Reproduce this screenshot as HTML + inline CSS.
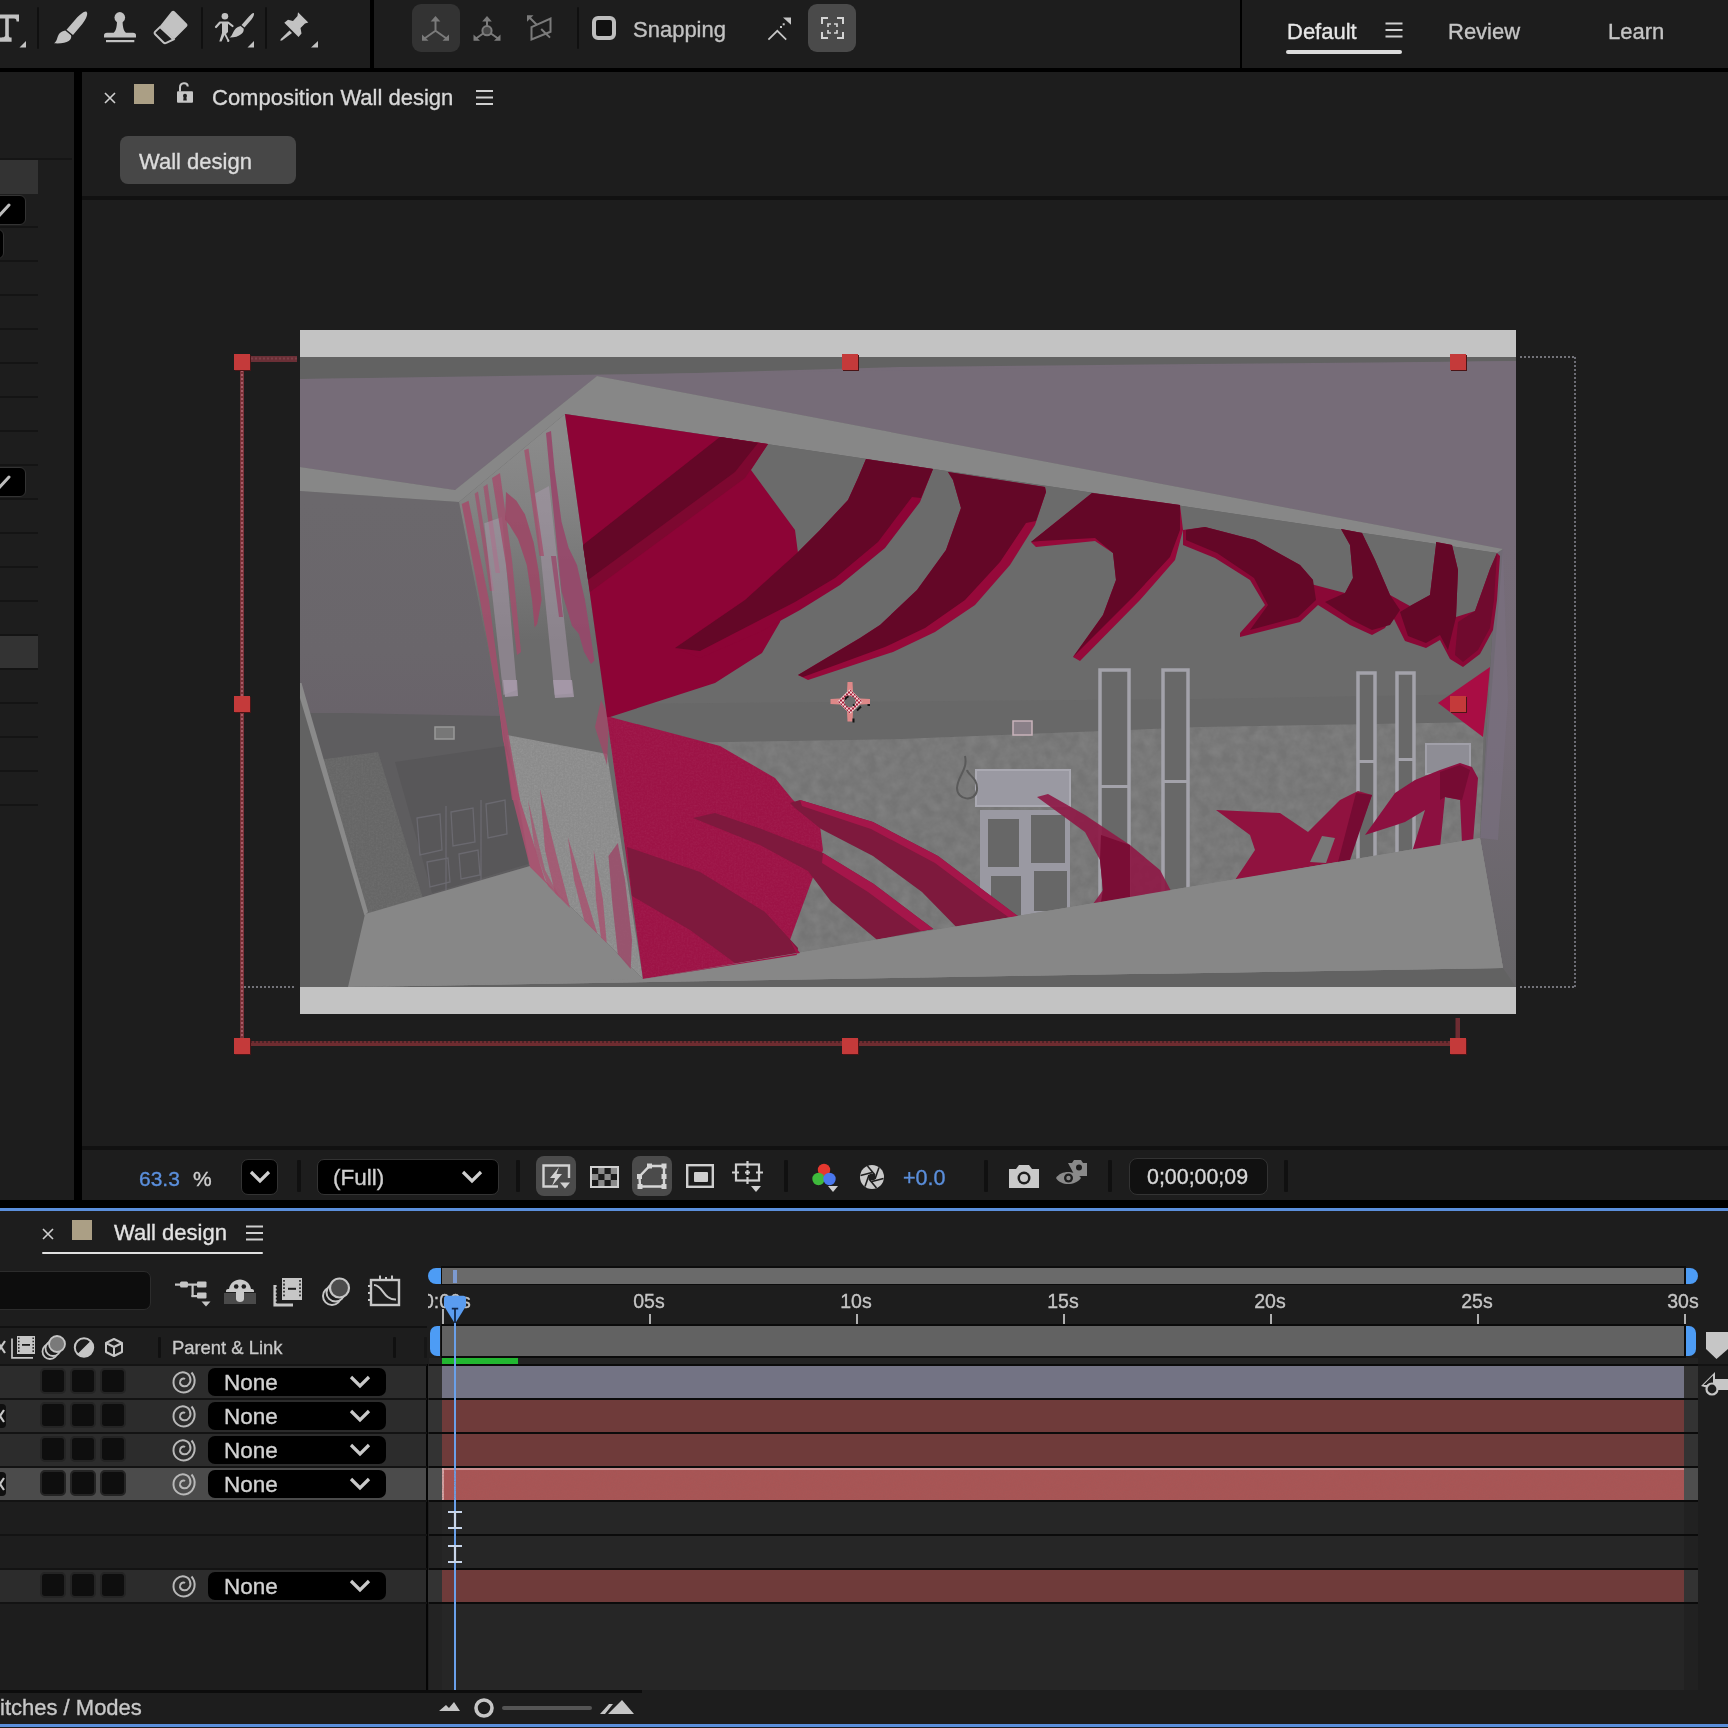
<!DOCTYPE html>
<html><head><meta charset="utf-8"><title>Wall design</title>
<style>
html,body{margin:0;padding:0}
body{width:1728px;height:1728px;overflow:hidden;background:#1d1d1d;font-family:"Liberation Sans",sans-serif;color:#d4d4d4;font-size:22px}
#r{position:relative;width:1728px;height:1728px;overflow:hidden;background:#1d1d1d}
.a{position:absolute}
.t{position:absolute;white-space:nowrap;line-height:1;will-change:transform;-webkit-text-stroke:0.350px currentColor}
svg{position:absolute;overflow:visible}
.sep{position:absolute;background:#101010;width:3px;border-radius:1px}
.sw{position:absolute;width:26px;height:26px;background:#0e0e0e;border:2px solid #242424;border-radius:5px;box-sizing:border-box}
.dd{position:absolute;left:208px;width:178px;height:28px;background:#000;border-radius:7px}
.row{position:absolute;left:0;width:426px;height:32px;background:#2c2c2c}
.bar{position:absolute;left:442px;width:1242px;height:32px}
.trk{position:absolute;left:428px;width:1270px;height:32px;background:#333}
</style></head><body><div id="r">
<!-- top toolbar -->
<div class="a" style="left:0;top:68px;width:1728px;height:4px;background:#000"></div>
<div class="a" style="left:370px;top:0;width:4px;height:68px;background:#000"></div>
<div class="a" style="left:1240px;top:0;width:2px;height:68px;background:#000"></div>
<div class="sep" style="left:37px;top:7px;height:42px;width:2px"></div>
<div class="sep" style="left:201px;top:7px;height:42px;width:2px"></div>
<div class="sep" style="left:265px;top:7px;height:42px;width:2px"></div>
<div class="sep" style="left:577px;top:7px;height:42px;width:2px"></div>
<div class="a" style="left:412px;top:4px;width:48px;height:48px;background:#333;border-radius:9px"></div>
<div class="a" style="left:808px;top:4px;width:48px;height:48px;background:#4a4a4a;border-radius:9px"></div>
<div class="a" style="left:592px;top:16px;width:24px;height:24px;box-sizing:border-box;border:4px solid #bdbdbd;border-radius:6px;background:#111"></div>
<div class="t" style="left:633px;top:19px;font-size:22px;color:#c2c2c2">Snapping</div>
<div class="t" style="left:1287px;top:21px;font-size:22px;color:#e6e6e6">Default</div>
<div class="a" style="left:1286px;top:50px;width:116px;height:4px;background:#dcdcdc;border-radius:2px"></div>
<div class="t" style="left:1448px;top:21px;font-size:22px;color:#c4c4c4">Review</div>
<div class="t" style="left:1608px;top:21px;font-size:22px;color:#c4c4c4">Learn</div>
<svg style="left:1385px;top:22px" width="18" height="16" viewBox="0 0 18 16"><path d="M0.500 1.500H17.500M0.500 8H17.500M0.500 14.500H17.500" stroke="#cfcfcf" stroke-width="1.800"/></svg>
<svg style="left:0;top:0" width="400" height="60" viewBox="0 0 400 60"><g fill="#c2c2c2"><path d="M-8 14.500H19V21.500H16.500C16.500 19.500 16 18.500 14 18.500H8.800V35.500C8.800 37.300 9.500 37.600 11.600 37.600V41.700H-1V37.600C1 37.600 5.200 37.500 5.200 35.500V18.500H-8Z"/><path d="M19.500 47.500H26V41Z"/><path d="M247.500 47.500H254V41Z"/><path d="M311 47.500H318V41Z"/><path d="M86.500 11.800C88.600 13.600 85.800 20 82.300 24L73 35L66.500 29.800L76 18.800C80 14.300 85 10.500 86.500 11.800Z"/><path d="M65.300 30.600L71 35.200C72.600 39.800 67 44.200 54 43.300C59 41 55.300 32.600 65.300 30.600Z"/><circle cx="119.800" cy="17.400" r="5.300"/><path d="M117 20H122.600C122.600 25 123 30 126 33H113.600C116.600 30 117 25 117 20Z"/><path d="M104 37.600V35.500C104 33.800 105 32.800 107 32.800H133C135 32.800 136 33.800 136 35.500V37.600Z"/><rect x="106" y="40" width="28.300" height="2.200"/><path d="M171.500 11.500C172.500 10.500 173.800 10.500 174.800 11.500L186.700 23.400C187.700 24.400 187.700 25.700 186.700 26.700L174.200 39.200L159.800 26.200Z"/><path d="M160 27L173.500 39.500L166.300 42.800C165.300 43.500 164.300 43.300 163.500 42.500L155.200 34.200C154.400 33.400 154.400 32.400 155.200 31.600Z" fill="none" stroke="#c2c2c2" stroke-width="2"/><circle cx="224.900" cy="16.200" r="3.300"/><path d="M216 27L220 22.500H228L232.500 26" fill="none" stroke="#c2c2c2" stroke-width="2.200" stroke-linecap="round" stroke-linejoin="round"/><path d="M222 22H228V32L226 34L229 40H227L224.500 35L221.500 41.500H219.300L222 33Z"/><circle cx="228.200" cy="40.800" r="1.200"/><path d="M253.800 13C254.500 14 253.600 17 251.500 19.500L244.500 27.500L241.500 25L249 16.500C251 14.200 253 12.500 253.800 13Z"/><path d="M240.600 26L243.600 28.500C244.600 32 240.500 37.500 229.500 37.600C233.500 35.500 232.500 28 240.600 26Z"/><path d="M298 12.300L308.300 22.600L305 23.500L300.500 28L301.500 33.500L298.500 37L284.300 22.700L288 19.700L293 21L297.500 16Z"/><path d="M289.500 30.500L292 33L282 40.500L280.300 40.800L280.800 39Z"/></g></svg><svg style="left:400px;top:0" width="200" height="60" viewBox="400 0 200 60"><g stroke="#7b7b7b" stroke-width="2" fill="none"><path d="M435.5 30.700V20M435.5 30.700L424.5 38.500M435.5 30.700L446.5 38.500"/></g><g fill="#7b7b7b"><path d="M435.5 16L440.3 21.500H430.7Z"/><path d="M422 40.800V34.500L428.5 40.800Z"/><path d="M449 40.800V34.500L442.5 40.800Z"/></g><g stroke="#7b7b7b" stroke-width="2" fill="none"><path d="M487 30.700V20M487 30.700L476 38.500M487 30.700L498 38.500"/></g><g fill="#7b7b7b"><path d="M487 16L491.8 21.500H482.2Z"/><path d="M473.5 40.800V34.500L480 40.800Z"/><path d="M500.5 40.800V34.500L494 40.800Z"/></g><circle cx="487" cy="30.700" r="4.600" fill="#444" stroke="#7b7b7b" stroke-width="2"/><path d="M531.500 27.200L550.500 18.500V31.800L531.500 39.400Z" fill="none" stroke="#7b7b7b" stroke-width="2"/><path d="M537 25L529.500 17.500M541.200 29L550 37.600" stroke="#7b7b7b" stroke-width="2"/><path d="M527 15.300H533.500L527 21.800Z" fill="#7b7b7b"/></svg><svg style="left:760px;top:0" width="100" height="60" viewBox="760 0 100 60"><path d="M768.400 39.700L777.300 30.800L786.200 39.700" fill="none" stroke="#c6c6c6" stroke-width="1.700"/><path d="M783 17.400H791V24.800Z" fill="#c6c6c6"/><rect x="782.700" y="23.300" width="2" height="2" fill="#c6c6c6"/><rect x="780" y="26" width="2" height="2" fill="#c6c6c6"/><g fill="none" stroke="#d4d4d4" stroke-width="2"><path d="M822 24V18H828M837 18H843V24M843 32V38H837M828 38H822V32"/><path d="M828 27V24H831M834 24H837V27M837 30V33H834M831 33H828V30" stroke-width="1.700"/></g></svg>
<!-- left panel + comp header -->
<div class="a" style="left:74px;top:72px;width:8px;height:1128px;background:#000"></div>
<div class="a" style="left:82px;top:196px;width:1646px;height:4px;background:#111"></div>
<div class="a" style="left:82px;top:1146px;width:1646px;height:4px;background:#111"></div>
<div class="a" style="left:0;top:1200px;width:1728px;height:8px;background:#000"></div>
<div class="a" style="left:0;top:1208px;width:1728px;height:3px;background:#5b8fdc"></div>
<div class="a" style="left:134px;top:84px;width:20px;height:20px;background:#ab9f85"></div>
<svg style="left:174px;top:80px" width="24" height="26" viewBox="174 80 24 26"><rect x="177" y="91.200" width="16" height="11.600" rx="1" fill="#c6c6c6"/><path d="M180 91.500V87.500C180 82 187.500 82 187.800 86.500" fill="none" stroke="#c6c6c6" stroke-width="2"/><circle cx="185" cy="95.800" r="2" fill="#1d1d1d"/><path d="M183.800 96H186.200L186.800 100.500H183.200Z" fill="#1d1d1d"/></svg>
<div class="t" style="left:212px;top:87px;font-size:22px;color:#d8d8d8">Composition Wall design</div>
<div class="a" style="left:120px;top:136px;width:176px;height:48px;background:#474747;border-radius:8px"></div>
<div class="t" style="left:139px;top:151px;font-size:22px;color:#dcdcdc">Wall design</div>
<svg style="left:104px;top:92px" width="12" height="12" viewBox="0 0 12 12"><path d="M1 1L11 11M11 1L1 11" stroke="#cfcfcf" stroke-width="1.600"/></svg>
<svg style="left:476px;top:90px" width="17" height="15" viewBox="0 0 17 15"><path d="M0 1H17M0 7.500H17M0 14H17" stroke="#cfcfcf" stroke-width="1.800"/></svg>

<div class="a" style="left:0;top:158px;width:72px;height:2px;background:#151515"></div><div class="a" style="left:0;top:160px;width:38px;height:34px;background:#333"></div><div class="a" style="left:0;top:636px;width:38px;height:34px;background:#333"></div><div class="a" style="left:0;top:226px;width:38px;height:2px;background:#141414"></div><div class="a" style="left:0;top:260px;width:38px;height:2px;background:#141414"></div><div class="a" style="left:0;top:294px;width:38px;height:2px;background:#141414"></div><div class="a" style="left:0;top:328px;width:38px;height:2px;background:#141414"></div><div class="a" style="left:0;top:362px;width:38px;height:2px;background:#141414"></div><div class="a" style="left:0;top:396px;width:38px;height:2px;background:#141414"></div><div class="a" style="left:0;top:430px;width:38px;height:2px;background:#141414"></div><div class="a" style="left:0;top:464px;width:38px;height:2px;background:#141414"></div><div class="a" style="left:0;top:498px;width:38px;height:2px;background:#141414"></div><div class="a" style="left:0;top:532px;width:38px;height:2px;background:#141414"></div><div class="a" style="left:0;top:566px;width:38px;height:2px;background:#141414"></div><div class="a" style="left:0;top:600px;width:38px;height:2px;background:#141414"></div><div class="a" style="left:0;top:634px;width:38px;height:2px;background:#141414"></div><div class="a" style="left:0;top:668px;width:38px;height:2px;background:#141414"></div><div class="a" style="left:0;top:702px;width:38px;height:2px;background:#141414"></div><div class="a" style="left:0;top:736px;width:38px;height:2px;background:#141414"></div><div class="a" style="left:0;top:770px;width:38px;height:2px;background:#141414"></div><div class="a" style="left:0;top:804px;width:38px;height:2px;background:#141414"></div><div class="a" style="left:-8px;top:195px;width:34px;height:30px;background:#000;border:1px solid #333;border-radius:6px;box-sizing:border-box"></div><div class="a" style="left:-8px;top:229px;width:12px;height:30px;background:#000;border:1px solid #333;border-radius:6px;box-sizing:border-box"></div><div class="a" style="left:-8px;top:467px;width:34px;height:30px;background:#000;border:1px solid #333;border-radius:6px;box-sizing:border-box"></div><svg style="left:0;top:195px" width="26" height="30"><path d="M-2 22L9 10" stroke="#bdbdbd" stroke-width="3" stroke-linecap="round"/></svg><svg style="left:0;top:467px" width="26" height="30"><path d="M-2 22L9 10" stroke="#bdbdbd" stroke-width="3" stroke-linecap="round"/></svg>
<svg style="left:0;top:0" width="1728" height="1200" viewBox="0 0 1728 1200"><defs><clipPath id="cp"><rect x="300" y="357" width="1216" height="630"/></clipPath><filter id="nz" x="0" y="0" width="100%" height="100%"><feTurbulence type="fractalNoise" baseFrequency="0.55" numOctaves="2" seed="3"/><feColorMatrix type="matrix" values="0 0 0 0 1  0 0 0 0 1  0 0 0 0 1  0.5 0.5 0 0 -0.38"/><feComposite in2="SourceGraphic" operator="in"/></filter><filter id="nz2" x="0" y="0" width="100%" height="100%"><feTurbulence type="fractalNoise" baseFrequency="0.09" numOctaves="3" seed="8"/><feColorMatrix type="matrix" values="0 0 0 0 1  0 0 0 0 1  0 0 0 0 1  0.9 0.9 0 0 -0.55"/><feComposite in2="SourceGraphic" operator="in"/></filter><linearGradient id="gl" x1="0" y1="0" x2="1" y2="0"><stop offset="0" stop-color="#7e7e7e"/><stop offset="1" stop-color="#8a8a8a"/></linearGradient><linearGradient id="rw" x1="0" y1="0" x2="0" y2="1"><stop offset="0" stop-color="#766c78"/><stop offset="0.45" stop-color="#746b76"/><stop offset="1" stop-color="#666567"/></linearGradient><linearGradient id="gg" gradientUnits="userSpaceOnUse" x1="0" y1="440" x2="0" y2="640"><stop offset="0" stop-color="#8a8a8a"/><stop offset="0.35" stop-color="#828282"/><stop offset="1" stop-color="#6b6b6b"/></linearGradient><linearGradient id="lw" gradientUnits="userSpaceOnUse" x1="0" y1="500" x2="0" y2="715"><stop offset="0" stop-color="#6b686c"/><stop offset="0.7" stop-color="#6a666b"/><stop offset="1" stop-color="#69636a"/></linearGradient></defs><rect x="300" y="330" width="1216" height="684" fill="#c3c3c3"/><g clip-path="url(#cp)"><rect x="300" y="357" width="1216" height="630" fill="#626262"/><polygon points="300,379 597,376 900,367 1516,361 1516,600 1503,549 597,376 455,490 300,467" fill="#766c78" /><polygon points="300,379 1516,361 1516,600 1503,549 597,376 455,490 300,467" fill="#766c78" /><polygon points="1503,549 1516,540 1516,987 1503,968 1480,838" fill="url(#rw)" /><polygon points="1497,553 1503,549 1508,700 1498,840 1480,838" fill="#7a7080" opacity="0.6"/><polygon points="300,491 459,502 530,866 365,914 300,690" fill="url(#lw)" /><polygon points="300,712 500,716 530,866 365,914 306,712" fill="#5e5d5f" /><polygon points="318,760 378,752 425,905 365,914" fill="#666" /><polygon points="318,760 378,752 425,905 365,914" fill="#fff" filter="url(#nz)" opacity="0.12"/><polygon points="395,762 512,745 528,864 432,893" fill="#585759" /><g fill="none" stroke="#727079" stroke-width="1.300" opacity="0.7"><path d="M417 818L440 814L442 850L420 855ZM451 812L473 808L475 842L453 846ZM486 804L505 800L507 834L488 838ZM427 862L448 858L450 882L430 887ZM459 854L478 850L480 875L461 879ZM446 806V890M481 800V880"/></g><polygon points="300,690 365,914 348,987 300,987" fill="#626262" /><polygon points="300,683 301.5,683 368,912 364.5,915.5 300,698" fill="#8a8a8a" /><polygon points="300,467 455,490 597,376 1503,549 1497,553 565,414 459,502 300,491" fill="#878787" /><polygon points="348,987 365,914 530,866 643,979 1480,838 1503,968" fill="#878787" /><polygon points="565,414 1497,553 1480,838 643,979" fill="#6b6b6b" /><polygon points="600,704 1200,699 1489,694 1484,722 1200,727 900,739 604,744" fill="#686868" /><polygon points="604,744 900,739 1200,727 1484,722 1480,838 643,979" fill="#747474" /><polygon points="604,744 900,739 1200,727 1484,722 1480,838 643,979" fill="#fff" filter="url(#nz2)" opacity="0.1"/><rect x="1100" y="670" width="29" height="232" fill="#686868" stroke="#a3a2aa" stroke-width="3.500"/><rect x="1100" y="785" width="29" height="3" fill="#a3a2aa"/><rect x="1163" y="670" width="25" height="232" fill="#686868" stroke="#a3a2aa" stroke-width="3.500"/><rect x="1163" y="780" width="25" height="3" fill="#a3a2aa"/><rect x="1358" y="673" width="17" height="189" fill="#686868" stroke="#a3a2aa" stroke-width="3.500"/><rect x="1358" y="760" width="17" height="3" fill="#a3a2aa"/><rect x="1397" y="673" width="17" height="189" fill="#686868" stroke="#a3a2aa" stroke-width="3.500"/><rect x="1397" y="758" width="17" height="3" fill="#a3a2aa"/><rect x="976" y="770" width="94" height="36" fill="#9a99a2" stroke="#aaa9b2" stroke-width="2"/><rect x="980" y="810" width="90" height="105" fill="#9a99a2"/><rect x="988" y="819" width="31" height="48" fill="#676767"/><rect x="1031" y="815" width="34" height="48" fill="#676767"/><rect x="991" y="876" width="30" height="40" fill="#676767"/><rect x="1034" y="871" width="33" height="40" fill="#676767"/><rect x="1426" y="744" width="44" height="30" fill="#8e8d95" stroke="#a09fa8" stroke-width="2"/><rect x="1013" y="721" width="19" height="14" fill="#8a8088" stroke="#c9b3ba" stroke-width="1.500"/><path d="M965 756C968 770 958 775 957 788C957 800 975 803 977 790C978 778 968 775 967 770" fill="none" stroke="#5a5a5a" stroke-width="2"/><rect x="435" y="727" width="19" height="12" fill="#777" stroke="#999" stroke-width="1.500"/><polygon points="643,979 1480,838 1503,968 348,987" fill="#878787" /><polygon points="459,502 565,414 643,979 530,866" fill="url(#gg)" /><polygon points="507,735 607,754 643,979 530,866" fill="#8b8b8b" /><polygon points="507,735 607,754 643,979 530,866" fill="#fff" filter="url(#nz)" opacity="0.22"/><polygon points="503,680 517,680 518,696 505,697" fill="#aa9cae" opacity="0.8"/><polygon points="553,680 572,680 574,697 555,698" fill="#aa9cae" opacity="0.8"/><polygon points="461.7,504 468.6,500.7 489,600 501.6,695 520,800 512,800 497,695 480,600" fill="#a44c6b" opacity="0.85"/><polygon points="474.7,493.7 478,491.5 494,591 490,591" fill="#a44c6b" opacity="0.7"/><polygon points="483.4,486.8 487.5,484 500,573 495.5,573" fill="#a44c6b" opacity="0.7"/><polygon points="484.3,523.3 502,517 517,690 503.4,695" fill="#ab9cae" opacity="0.5"/><polygon points="492,478 500,473 512,560 521,652 517,655 506,565" fill="#a44c6b" opacity="0.8"/><polygon points="506,492 516.4,500.7 525,514.6 533.7,542.4 539,573.6 541.6,599.7 537.2,624 534.6,627.4 532,599.7 526.8,565 518,539 509.4,525 505,519.8" fill="#9c4866" opacity="0.9"/><polygon points="534.6,493.7 549,486 572.5,693.4 554.6,695" fill="#ab9cae" opacity="0.5"/><polygon points="524.2,450.3 528.5,448.6 544,556 539.5,556" fill="#a44c6b" opacity="0.75"/><polygon points="546,433 551,431 554.6,469.4 561.5,521.5 568.5,547.6 577,565 585,600 594.5,660.4 591,664 584,651.7 578.9,634 572,625.7 561.5,591 558,556 551,486.8" fill="#97486a" opacity="0.92"/><polygon points="551,556 556,556 563,617 559,617" fill="#97486a" opacity="0.8"/><polygon points="496,684 503,740 520,800 545,880 553,890 530,867 513,800" fill="#a8506e" opacity="0.9"/><polygon points="540,789 555,850 570,908 555,893 545,850" fill="#a8506e" opacity="0.8"/><polygon points="528,800 545,870 560,898 548,886 535,850" fill="#a8506e" opacity="0.7"/><polygon points="567.8,837 584,890 597.4,933.7 584.4,920.7 574,880" fill="#a8506e" opacity="0.8"/><polygon points="593.7,850 603,900 606.7,943 601,937.4 596,900" fill="#a8506e" opacity="0.8"/><polygon points="608.5,856 617.8,843 625,880 632,940 630.7,969 617.8,954 612,900" fill="#9a4a68" opacity="0.85"/><polygon points="601,700 595,727 607,765 609,717" fill="#a04868" opacity="0.8"/><polygon points="565,414 720,437 768,444 751,470 795,530 798,553 780,622 762,653 715,683 610,717 607,717" fill="#8d0436" /><polygon points="607,717 610,717 720,746 775,778 793,800 820,826 823,850 790,940 797,955 643,979" fill="#9d1346" /><polygon points="607,717 610,717 720,746 775,778 793,800 820,826 823,850 790,940 797,955 643,979" fill="#fff" filter="url(#nz)" opacity="0.10"/><polygon points="583,545 720,437 768,444 745,478 590,592" fill="#7d0830" /><polygon points="583,545 720,437 758,443 735,472 588,580" fill="#640727" /><polygon points="675,648 745,600 797,553 820,530 848,500 858,478 866,459 933,469 920,502 885,548 840,585 800,610 760,632 700,658" fill="#8d0436" /><polygon points="675,648 745,600 797,553 820,530 848,500 858,478 866,459 933,469 921,498 912,497 878,542 835,578 795,602 760,620 700,651" fill="#640727" /><polygon points="798,675 860,638 880,625 917,590 946,550 961,508 953,480 948,472 1045,487 1046,492 1035,525 1010,565 975,605 935,632 893,652 808,680" fill="#96093a" /><polygon points="798,675 860,638 880,625 917,590 946,550 961,508 953,480 948,472 1045,487 1046,492 1036,521 1026,523 1000,562 965,600 925,628 885,647 803,677" fill="#640727" /><polygon points="1092,493 1180,505 1183,530 1175,560 1140,600 1080,661 1073,657 1103,615 1116,580 1113,553 1095,541 1036,547 1031,542" fill="#96093a" /><polygon points="1092,493 1180,505 1180,530 1170,557 1133,597 1078,652 1073,657 1103,615 1116,580 1113,553 1095,538 1040,541 1031,542" fill="#640727" /><polygon points="1183,530 1205,527 1255,540 1300,565 1313,580 1307,583 1345,593 1353,578 1350,545 1341,529 1362,533 1375,560 1390,595 1410,606 1430,595 1436,545 1436,542 1452,545 1458,570 1456,617 1475,611 1490,569 1497,553 1500,556 1497,600 1493,630 1480,654 1463,667 1450,659 1440,640 1426,648 1405,641 1392,615 1385,628 1372,635 1350,625 1318,605 1300,622 1240,637 1240,633 1265,605 1250,580 1215,558 1183,545" fill="#8a0836" /><polygon points="1186,530 1205,527 1255,540 1300,565 1313,580 1316,600 1298,617 1250,630 1268,605 1254,578 1217,553 1186,540" fill="#640727" /><polygon points="1341,529 1362,533 1375,560 1390,595 1400,610 1390,625 1372,630 1352,620 1325,602 1345,593 1353,578 1350,545" fill="#640727" /><polygon points="1436,542 1452,545 1458,570 1456,617 1448,650 1440,635 1426,643 1408,636 1400,612 1410,606 1430,595 1436,545" fill="#640727" /><polygon points="1497,553 1490,569 1475,611 1458,622 1455,655 1463,662 1478,650 1490,628 1494,600" fill="#700a2e" /><polygon points="1438,703 1490,667 1487,700 1483,737" fill="#a90d44" /><polygon points="627,847 700,872 765,912 798,948 797,955 735,963 690,930 632,896" fill="#7e193d" /><polygon points="693,818 715,813 760,828.6 823,853 873.4,883.7 933.4,929 876.7,939.6 831,901.5 808,871 760,845" fill="#7e193d" /><polygon points="823,853 873.4,883.7 933.4,929 921,931 868,892 822,863" fill="#a5164a" /><polygon points="790,803 800,800 873,822 938,856 987,893 1017.7,916 956,926.7 922,892 873,856 821,829 795,808" fill="#7e193d" /><polygon points="800,800 873,822 938,856 987,893 1017.7,916 1009,917.5 983,899 935,863 871,829 802,806" fill="#a5164a" /><polygon points="1037,797 1048,794 1085,815 1130,845 1160,870 1171,891 1093,904 1103,890 1100,860 1085,832" fill="#8e1a46" opacity="0.92"/><polygon points="1101,835 1130,845 1130,897 1101,902 1103,890 1100,860" fill="#7a0d35" /><polygon points="1216,810 1280,813 1308,832 1340,800 1358,791 1372,795 1348,860 1235,880 1255,850 1250,835" fill="#90123f" /><polygon points="1310,862 1322,836 1335,838 1326,863" fill="#787878" /><polygon points="1356,793 1372,795 1350,860 1338,862" fill="#760b33" /><polygon points="1365,835 1395,793 1415,780 1440,770 1460,763 1472,767 1478,778 1473,842 1462,843 1460,800 1445,797 1440,848 1412,852 1425,810 1405,822" fill="#8c1040" /><polygon points="1440,772 1460,765 1470,770 1462,800 1445,797 1440,800" fill="#760b33" /><polygon points="643,979 1480,838 1503,968 348,987" fill="#878787" /><polygon points="643,979 797,955 790,940 800,953" fill="#9d1346" /></g></svg>
<svg style="left:0;top:0" width="1728" height="1200" viewBox="0 0 1728 1200"><rect x="251" y="356" width="46" height="6" fill="#6a2f36"/><path d="M251 358.500H297" stroke="#7d4048" stroke-width="2" stroke-dasharray="2 2"/><rect x="240" y="370" width="4" height="668" fill="#7a3238"/><path d="M242 370V1038" stroke="#a85a66" stroke-width="2" stroke-dasharray="2 2"/><rect x="250" y="1041" width="1200" height="5" fill="#6e2c30"/><path d="M250 1042H1450" stroke="#4a2226" stroke-width="2" stroke-dasharray="2 2"/><rect x="1455.500" y="1018" width="4.500" height="20" fill="#6e2c32"/><path d="M244 987H296M1520 987H1576M1520 357H1576" stroke="#737379" stroke-width="2" stroke-dasharray="2 2"/><path d="M1575 357V987" stroke="#6c6c74" stroke-width="2" stroke-dasharray="2 2"/><rect x="235" y="355" width="16" height="16" fill="#4a1416"/><rect x="234" y="354" width="16" height="16" fill="#c43a3a"/><rect x="843" y="355" width="16" height="16" fill="#4a1416"/><rect x="842" y="354" width="16" height="16" fill="#c43a3a"/><rect x="1451" y="355" width="16" height="16" fill="#4a1416"/><rect x="1450" y="354" width="16" height="16" fill="#c43a3a"/><rect x="235" y="697" width="16" height="16" fill="#4a1416"/><rect x="234" y="696" width="16" height="16" fill="#c43a3a"/><rect x="1451" y="697" width="16" height="16" fill="#4a1416"/><rect x="1450" y="696" width="16" height="16" fill="#c43a3a"/><rect x="235" y="1039" width="16" height="16" fill="#4a1416"/><rect x="234" y="1038" width="16" height="16" fill="#c43a3a"/><rect x="843" y="1039" width="16" height="16" fill="#4a1416"/><rect x="842" y="1038" width="16" height="16" fill="#c43a3a"/><rect x="1451" y="1039" width="16" height="16" fill="#4a1416"/><rect x="1450" y="1038" width="16" height="16" fill="#c43a3a"/><defs><pattern id="chk" width="4" height="4" patternUnits="userSpaceOnUse" x="0" y="0"><rect width="4" height="4" fill="#f6d5d5"/><rect width="2" height="2" fill="#a8203c"/><rect x="2" y="2" width="2" height="2" fill="#a8203c"/></pattern></defs><g transform="translate(850,701.500)"><path d="M-2.500 -19.500H2.500L3 -10H-3ZM-2.500 20H2.500L3 10H-3ZM-19.500 -2.500V2.500L-10 3V-3ZM20 -2.500V2.500L10 3V-3Z" fill="#de8888"/><path d="M0 -12.500L12.500 0L0 12.500L-12.500 0ZM0 -6L-6 0L0 6L6 0Z" fill="url(#chk)" fill-rule="evenodd"/><path d="M0 -12.500L12.500 0L0 12.500L-12.500 0Z" fill="none" stroke="#d8b0b0" stroke-width="1" opacity="0.6"/><circle r="5.500" fill="#6e6e6e"/><path d="M-5 -2A5.500 5.500 0 0 1 -1.500 -5.200" fill="none" stroke="#111" stroke-width="2"/><path d="M3 4L4.500 3M7 9L11 5M17.500 3.500H20M3.500 17V21" stroke="#151515" stroke-width="2"/></g></svg>
<!-- footer --><div class="t" style="left:139px;top:1168px;font-size:21px;color:#5b8fdc">63.3</div><div class="t" style="left:193px;top:1168px;font-size:21px;color:#cfcfcf">%</div><div class="a" style="left:241px;top:1159px;width:37px;height:36px;background:#000;border:1px solid #333;border-radius:7px;box-sizing:border-box"></div><svg style="left:249px;top:1170px" width="22" height="14" viewBox="0 0 22 14"><path d="M2 2L11 11L20 2" fill="none" stroke="#cfcfcf" stroke-width="3.200"/></svg><div class="sep" style="left:297px;top:1160px;height:32px;width:4px"></div><div class="a" style="left:317px;top:1159px;width:182px;height:36px;background:#000;border:1px solid #333;border-radius:7px;box-sizing:border-box"></div><div class="t" style="left:333px;top:1167px;font-size:22.500px;color:#cfcfcf">(Full)</div><svg style="left:461px;top:1170px" width="22" height="14" viewBox="0 0 22 14"><path d="M2 2L11 11L20 2" fill="none" stroke="#cfcfcf" stroke-width="3.200"/></svg><div class="sep" style="left:516px;top:1160px;height:32px;width:4px"></div><div class="a" style="left:536px;top:1156px;width:40px;height:40px;background:#4b4b4b;border-radius:8px"></div><div class="a" style="left:632px;top:1156px;width:40px;height:40px;background:#4b4b4b;border-radius:8px"></div><svg style="left:536px;top:1156px" width="40" height="40" viewBox="0 0 40 40"><path d="M33 22V9.500H7.500V30.500H22" fill="none" stroke="#d2d2d2" stroke-width="2.400"/><path d="M23 11L14 22H19L16 30L26 18H20.500Z" fill="#d2d2d2"/><path d="M24 26.500H34L29 32.500Z" fill="#d2d2d2"/></svg><svg style="left:590px;top:1166px" width="29" height="22" viewBox="0 0 29 22"><rect x="1" y="1" width="27" height="20" fill="#1a1a1a" stroke="#cfcfcf" stroke-width="2"/><rect x="8.25" y="2" width="6.250" height="6" fill="#8a8a8a"/><rect x="20.75" y="2" width="6.250" height="6" fill="#8a8a8a"/><rect x="2" y="8" width="6.250" height="6" fill="#8a8a8a"/><rect x="14.5" y="8" width="6.250" height="6" fill="#8a8a8a"/><rect x="8.25" y="14" width="6.250" height="6" fill="#8a8a8a"/><rect x="20.75" y="14" width="6.250" height="6" fill="#8a8a8a"/></svg><svg style="left:632px;top:1156px" width="40" height="40" viewBox="0 0 40 40"><path d="M8 30.500L7.500 20.500L17.500 10H32V30.500Z" fill="none" stroke="#d6d6d6" stroke-width="2.400"/><g fill="#d6d6d6"><rect x="5.500" y="28" width="5" height="5"/><rect x="29.500" y="28" width="5" height="5"/><rect x="29.500" y="7.500" width="5" height="5"/><rect x="15" y="7.500" width="5" height="5"/><rect x="5" y="18" width="5" height="5"/><rect x="29.500" y="18" width="5" height="5"/></g></svg><svg style="left:686px;top:1164px" width="28" height="24" viewBox="0 0 28 24"><rect x="1.200" y="1.200" width="25.600" height="21.600" fill="none" stroke="#cfcfcf" stroke-width="2.400"/><rect x="8" y="8" width="14" height="10" rx="1" fill="#cfcfcf"/></svg><svg style="left:732px;top:1160px" width="32" height="34" viewBox="0 0 32 34"><rect x="4" y="4.500" width="23" height="16" fill="none" stroke="#cfcfcf" stroke-width="2.200"/><path d="M15.500 1V8M15.500 17V24M0 12.500H7M24 12.500H31M13 12.500H18M15.500 10V15" stroke="#cfcfcf" stroke-width="2.200"/><path d="M19 26H29L24 32Z" fill="#cfcfcf"/></svg><div class="sep" style="left:784px;top:1160px;height:32px;width:4px"></div><svg style="left:808px;top:1160px" width="34" height="34" viewBox="0 0 34 34"><circle cx="16" cy="10" r="6.200" fill="#e5382f"/><circle cx="10.500" cy="19" r="6.200" fill="#3fba3c"/><circle cx="21.500" cy="19" r="6.200" fill="#4a78ee"/><path d="M20 26H30L25 32Z" fill="#cfcfcf"/></svg><svg style="left:859px;top:1164px" width="26" height="26" viewBox="-13 -13 26 26"><circle r="12" fill="#c9c9c9"/><g stroke="#1d1d1d" stroke-width="1.600" fill="none"><path d="M-4.500 -11L3 -2"/><path d="M7 -9.500L3 2"/><path d="M11.500 1.500L0 4.500"/><path d="M4.500 11L-3 2"/><path d="M-7 9.500L-3 -2"/><path d="M-11.500 -1.500L0 -4.500"/></g><circle r="3.600" fill="#1d1d1d"/></svg><div class="t" style="left:903px;top:1168px;font-size:21.500px;color:#5b8fdc">+0.0</div><div class="sep" style="left:984px;top:1160px;height:32px;width:4px"></div><svg style="left:1009px;top:1164px" width="30" height="25" viewBox="0 0 30 25"><path d="M0 5H7L10 1H20L23 5H30V24H0Z" fill="#c9c9c9"/><circle cx="15" cy="14" r="6.500" fill="#1d1d1d"/><circle cx="15" cy="14" r="4" fill="#c9c9c9"/></svg><svg style="left:1055px;top:1158px" width="34" height="32" viewBox="0 0 34 32"><path d="M13 5H17L19 2H26L28 5H32V18H20" fill="#8a8a8a"/><circle cx="24" cy="9.500" r="3" fill="#1d1d1d"/><path d="M1 20C6 12 20 12 26 20C20 28 6 28 1 20Z" fill="#8a8a8a"/><circle cx="13.500" cy="20" r="4.500" fill="#1d1d1d"/><circle cx="13.500" cy="20" r="2.200" fill="#8a8a8a"/></svg><div class="sep" style="left:1108px;top:1160px;height:32px;width:4px"></div><div class="a" style="left:1129px;top:1158px;width:139px;height:37px;background:#111;border:1px solid #333;border-radius:8px;box-sizing:border-box"></div><div class="t" style="left:1147px;top:1167px;font-size:21.400px;color:#d8d8d8">0;00;00;09</div><div class="sep" style="left:1284px;top:1160px;height:32px;width:4px"></div>
<!-- timeline --><svg style="left:42px;top:1228px" width="12" height="12" viewBox="0 0 12 12"><path d="M1 1L11 11M11 1L1 11" stroke="#cfcfcf" stroke-width="1.600"/></svg><div class="a" style="left:72px;top:1220px;width:20px;height:20px;background:#ab9f85"></div><div class="t" style="left:114px;top:1222px;font-size:22px;color:#e2e2e2">Wall design</div><svg style="left:246px;top:1225px" width="17" height="16" viewBox="0 0 17 16"><path d="M0 1.500H17M0 8H17M0 14.500H17" stroke="#cfcfcf" stroke-width="1.800"/></svg><div class="a" style="left:42px;top:1252px;width:221px;height:2px;background:#e0e0e0;border-radius:1px"></div><div class="a" style="left:-10px;top:1271px;width:161px;height:39px;background:#0d0d0d;border:1px solid #2c2c2c;border-radius:7px;box-sizing:border-box"></div><svg style="left:172px;top:1276px" width="40" height="34" viewBox="0 0 40 34"><g fill="#c6c6c6"><rect x="3" y="7.500" width="10" height="2.200"/><rect x="8" y="5.500" width="8" height="6" rx="1.500"/><rect x="16" y="7.500" width="10" height="2.200"/><rect x="25" y="5.500" width="9.500" height="6" rx="1"/><rect x="19.500" y="8" width="2.200" height="13"/><rect x="19.500" y="19" width="7" height="2.200"/><rect x="25" y="16.500" width="9.500" height="6" rx="1"/><path d="M29.500 25.500H38.500L34 30.500Z"/></g></svg><svg style="left:222px;top:1276px" width="36" height="32" viewBox="0 0 36 32"><rect x="2" y="17" width="32" height="11" fill="#4a4a4a"/><path d="M4 15C4 13 6 13 7 13C8 7 13 3.500 18 3.500C23 3.500 28 7 29 13C30 13 32 13 32 15V16H22V23C22 27 14 27 14 23V16H4Z" fill="#c9c9c9"/><circle cx="14.200" cy="10.500" r="2.300" fill="#1d1d1d"/><circle cx="21.800" cy="10.500" r="2.300" fill="#1d1d1d"/></svg><svg style="left:272px;top:1276px" width="34" height="32" viewBox="0 0 34 32"><path d="M3 9V29H21" fill="none" stroke="#c6c6c6" stroke-width="3.200"/><rect x="10" y="2" width="20" height="22" fill="#c6c6c6"/><path d="M12 4V22M28 4V22" stroke="#1d1d1d" stroke-width="1.600" stroke-dasharray="1.800 1.800"/><path d="M4.500 11V27" stroke="#1d1d1d" stroke-width="1.400" stroke-dasharray="1.800 1.800"/><rect x="16" y="11.800" width="8" height="2" fill="#1d1d1d"/></svg><svg style="left:320px;top:1276px" width="34" height="32" viewBox="0 0 34 32"><circle cx="12" cy="20" r="9" fill="#1d1d1d" stroke="#c6c6c6" stroke-width="2"/><circle cx="15.500" cy="16.500" r="9" fill="#1d1d1d" stroke="#c6c6c6" stroke-width="2"/><circle cx="19.500" cy="12" r="9.500" fill="#4c4c4c" stroke="#c6c6c6" stroke-width="2.200"/></svg><svg style="left:366px;top:1274px" width="36" height="34" viewBox="0 0 36 34"><rect x="5" y="6" width="28" height="25" fill="none" stroke="#c6c6c6" stroke-width="2.400"/><path d="M14 1.500V6M20 3V6M26 1.500V6M2 12H5M2 19H5M2 26H5" stroke="#c6c6c6" stroke-width="2"/><path d="M8 11C17 11 17 26 30 25.500" fill="none" stroke="#c6c6c6" stroke-width="2"/></svg><div class="a" style="left:0;top:1326px;width:427px;height:2px;background:#111"></div><div class="a" style="left:426px;top:1364px;width:2px;height:328px;background:#050505"></div><svg style="left:0;top:1334px" width="130" height="28" viewBox="0 0 130 28"><path d="M-3 7L5 19M5 7L-3 19" stroke="#c6c6c6" stroke-width="2.200"/><path d="M12 4.500V23.800H33" fill="none" stroke="#c6c6c6" stroke-width="1.700"/><rect x="17" y="2" width="18" height="18" fill="#c6c6c6"/><path d="M18.800 3.500V19M33.200 3.500V19" stroke="#1d1d1d" stroke-width="1.400" stroke-dasharray="1.600 1.600"/><rect x="22" y="10" width="8" height="1.800" fill="#1d1d1d"/><circle cx="50" cy="17.500" r="7.500" fill="#1d1d1d" stroke="#c6c6c6" stroke-width="1.800"/><circle cx="53" cy="14.500" r="7.500" fill="#1d1d1d" stroke="#c6c6c6" stroke-width="1.800"/><circle cx="57" cy="10" r="8" fill="#7a7a7a" stroke="#c6c6c6" stroke-width="1.800"/><circle cx="84" cy="13.500" r="9.200" fill="#1d1d1d" stroke="#c6c6c6" stroke-width="2"/><path d="M77.500 20A9.200 9.200 0 0 0 90.500 7Z" fill="#c6c6c6"/><path d="M114 5L122 9V18L114 22L106 18V9Z M106 9L114 13L122 9M114 13V22" fill="none" stroke="#c6c6c6" stroke-width="2" stroke-linejoin="round"/></svg><div class="sep" style="left:158px;top:1337px;height:21px"></div><div class="sep" style="left:393px;top:1337px;height:21px"></div><div class="sep" style="left:424px;top:1337px;height:21px;background:#161616"></div><div class="t" style="left:172px;top:1339px;font-size:18.400px;color:#c8c8c8">Parent &amp; Link</div><div class="a" style="left:0;top:1364px;width:427px;height:2px;background:#141414"></div><div class="row" style="top:1366px;background:#2c2c2c"></div><div class="sw" style="left:40px;top:1368px"></div><div class="sw" style="left:70px;top:1368px"></div><div class="sw" style="left:100px;top:1368px"></div><svg style="left:171px;top:1369px" width="26" height="26" viewBox="-13 -13 26 26"><path d="M7.500 -9.500C13 -3 11 6 4 9.500C-3 12.500 -10 8 -10.500 1C-11 -6 -5 -10.500 0.500 -9.500C6 -8.500 8 -2 5 2C2.500 5.500 -3 5 -4 1C-4.500 -2.500 -1 -4.500 1 -3" fill="none" stroke="#b8b8b8" stroke-width="2"/></svg><div class="dd" style="top:1368px"></div><div class="t" style="left:224px;top:1372px;font-size:22.500px;color:#d2d2d2">None</div><svg style="left:349px;top:1375px" width="22" height="14" viewBox="0 0 22 14"><path d="M2 2L11 11L20 2" fill="none" stroke="#c9c9c9" stroke-width="3.200"/></svg><div class="row" style="top:1400px;background:#2c2c2c"></div><div class="sw" style="left:40px;top:1402px"></div><div class="sw" style="left:70px;top:1402px"></div><div class="sw" style="left:100px;top:1402px"></div><svg style="left:171px;top:1403px" width="26" height="26" viewBox="-13 -13 26 26"><path d="M7.500 -9.500C13 -3 11 6 4 9.500C-3 12.500 -10 8 -10.500 1C-11 -6 -5 -10.500 0.500 -9.500C6 -8.500 8 -2 5 2C2.500 5.500 -3 5 -4 1C-4.500 -2.500 -1 -4.500 1 -3" fill="none" stroke="#b8b8b8" stroke-width="2"/></svg><div class="dd" style="top:1402px"></div><div class="t" style="left:224px;top:1406px;font-size:22.500px;color:#d2d2d2">None</div><svg style="left:349px;top:1409px" width="22" height="14" viewBox="0 0 22 14"><path d="M2 2L11 11L20 2" fill="none" stroke="#c9c9c9" stroke-width="3.200"/></svg><div class="a" style="left:-6px;top:1404px;width:12px;height:24px;background:#0f0f0f;border-radius:4px"></div><svg style="left:0;top:1408px" width="8" height="16" viewBox="0 0 8 16"><path d="M-4 2L4 14M4 2L-4 14" stroke="#c6c6c6" stroke-width="2.200"/></svg><div class="row" style="top:1434px;background:#2c2c2c"></div><div class="sw" style="left:40px;top:1436px"></div><div class="sw" style="left:70px;top:1436px"></div><div class="sw" style="left:100px;top:1436px"></div><svg style="left:171px;top:1437px" width="26" height="26" viewBox="-13 -13 26 26"><path d="M7.500 -9.500C13 -3 11 6 4 9.500C-3 12.500 -10 8 -10.500 1C-11 -6 -5 -10.500 0.500 -9.500C6 -8.500 8 -2 5 2C2.500 5.500 -3 5 -4 1C-4.500 -2.500 -1 -4.500 1 -3" fill="none" stroke="#b8b8b8" stroke-width="2"/></svg><div class="dd" style="top:1436px"></div><div class="t" style="left:224px;top:1440px;font-size:22.500px;color:#d2d2d2">None</div><svg style="left:349px;top:1443px" width="22" height="14" viewBox="0 0 22 14"><path d="M2 2L11 11L20 2" fill="none" stroke="#c9c9c9" stroke-width="3.200"/></svg><div class="row" style="top:1468px;background:#4b4b4b"></div><div class="sw" style="left:40px;top:1470px"></div><div class="sw" style="left:70px;top:1470px"></div><div class="sw" style="left:100px;top:1470px"></div><svg style="left:171px;top:1471px" width="26" height="26" viewBox="-13 -13 26 26"><path d="M7.500 -9.500C13 -3 11 6 4 9.500C-3 12.500 -10 8 -10.500 1C-11 -6 -5 -10.500 0.500 -9.500C6 -8.500 8 -2 5 2C2.500 5.500 -3 5 -4 1C-4.500 -2.500 -1 -4.500 1 -3" fill="none" stroke="#b8b8b8" stroke-width="2"/></svg><div class="dd" style="top:1470px"></div><div class="t" style="left:224px;top:1474px;font-size:22.500px;color:#d2d2d2">None</div><svg style="left:349px;top:1477px" width="22" height="14" viewBox="0 0 22 14"><path d="M2 2L11 11L20 2" fill="none" stroke="#c9c9c9" stroke-width="3.200"/></svg><div class="a" style="left:-6px;top:1472px;width:12px;height:24px;background:#0f0f0f;border-radius:4px"></div><svg style="left:0;top:1476px" width="8" height="16" viewBox="0 0 8 16"><path d="M-4 2L4 14M4 2L-4 14" stroke="#c6c6c6" stroke-width="2.200"/></svg><div class="row" style="top:1570px;background:#2c2c2c"></div><div class="sw" style="left:40px;top:1572px"></div><div class="sw" style="left:70px;top:1572px"></div><div class="sw" style="left:100px;top:1572px"></div><svg style="left:171px;top:1573px" width="26" height="26" viewBox="-13 -13 26 26"><path d="M7.500 -9.500C13 -3 11 6 4 9.500C-3 12.500 -10 8 -10.500 1C-11 -6 -5 -10.500 0.500 -9.500C6 -8.500 8 -2 5 2C2.500 5.500 -3 5 -4 1C-4.500 -2.500 -1 -4.500 1 -3" fill="none" stroke="#b8b8b8" stroke-width="2"/></svg><div class="dd" style="top:1572px"></div><div class="t" style="left:224px;top:1576px;font-size:22.500px;color:#d2d2d2">None</div><svg style="left:349px;top:1579px" width="22" height="14" viewBox="0 0 22 14"><path d="M2 2L11 11L20 2" fill="none" stroke="#c9c9c9" stroke-width="3.200"/></svg><div class="a" style="left:0;top:1398px;width:427px;height:2px;background:#131313"></div><div class="a" style="left:0;top:1432px;width:427px;height:2px;background:#131313"></div><div class="a" style="left:0;top:1466px;width:427px;height:2px;background:#131313"></div><div class="a" style="left:0;top:1500px;width:427px;height:2px;background:#131313"></div><div class="a" style="left:0;top:1534px;width:427px;height:2px;background:#131313"></div><div class="a" style="left:0;top:1568px;width:427px;height:2px;background:#131313"></div><div class="a" style="left:0;top:1602px;width:427px;height:2px;background:#131313"></div><div class="a" style="left:0;top:1690px;width:642px;height:3px;background:#0c0c0c"></div><div class="t" style="left:0;top:1697px;font-size:22px;color:#c8c8c8">itches / Modes</div><div class="a" style="left:0;top:1724px;width:1728px;height:3px;background:#5b8fdc"></div><div class="a" style="left:429px;top:1262px;width:1269px;height:64px;background:#1d1d1d"></div><div class="a" style="left:429px;top:1364px;width:1269px;height:326px;background:#262626"></div><div class="a" style="left:1684px;top:1364px;width:14px;height:326px;background:#212121"></div><div class="a" style="left:429px;top:1364px;width:13px;height:326px;background:#232323"></div><div class="a" style="left:441px;top:1266px;width:1245px;height:19px;background:#0c0c0c"></div><div class="a" style="left:442px;top:1268px;width:1242px;height:16px;background:#6a6a6a"></div><div class="a" style="left:453px;top:1270px;width:4px;height:13px;background:#7d9ad0"></div><div class="a" style="left:428px;top:1268px;width:13px;height:16px;background:#4d9cf5;border-radius:9px 0 0 9px"></div><div class="a" style="left:1686px;top:1268px;width:12px;height:16px;background:#4d9cf5;border-radius:0 9px 9px 0"></div><div class="a" style="left:649px;top:1314px;width:2px;height:10px;background:#b0b0b0"></div><div class="t" style="left:619px;top:1292px;width:60px;text-align:center;font-size:19.500px;color:#c4c4c4">05s</div><div class="a" style="left:856px;top:1314px;width:2px;height:10px;background:#b0b0b0"></div><div class="t" style="left:826px;top:1292px;width:60px;text-align:center;font-size:19.500px;color:#c4c4c4">10s</div><div class="a" style="left:1063px;top:1314px;width:2px;height:10px;background:#b0b0b0"></div><div class="t" style="left:1033px;top:1292px;width:60px;text-align:center;font-size:19.500px;color:#c4c4c4">15s</div><div class="a" style="left:1270px;top:1314px;width:2px;height:10px;background:#b0b0b0"></div><div class="t" style="left:1240px;top:1292px;width:60px;text-align:center;font-size:19.500px;color:#c4c4c4">20s</div><div class="a" style="left:1477px;top:1314px;width:2px;height:10px;background:#b0b0b0"></div><div class="t" style="left:1447px;top:1292px;width:60px;text-align:center;font-size:19.500px;color:#c4c4c4">25s</div><div class="a" style="left:1684px;top:1314px;width:2px;height:10px;background:#b0b0b0"></div><div class="t" style="left:1653px;top:1292px;width:60px;text-align:center;font-size:19.500px;color:#c4c4c4">30s</div><div class="a" style="left:428px;top:1290px;width:50px;height:24px;overflow:hidden"><div class="t" style="left:-5px;top:2px;font-size:19.500px;color:#c4c4c4">0:00s</div></div><div class="a" style="left:442px;top:1309px;width:2px;height:15px;background:#b0b0b0"></div><div class="a" style="left:441px;top:1324px;width:1245px;height:34px;background:#0a0a0a"></div><div class="a" style="left:442px;top:1326px;width:1242px;height:30px;background:#626262"></div><div class="a" style="left:430px;top:1326px;width:10px;height:30px;background:#4d9cf5;border-radius:7px 0 0 7px"></div><div class="a" style="left:1686px;top:1326px;width:10px;height:30px;background:#4d9cf5;border-radius:0 7px 7px 0"></div><div class="a" style="left:429px;top:1358px;width:1269px;height:6px;background:#232323"></div><div class="a" style="left:442px;top:1358px;width:76px;height:6px;background:#22b731"></div><div class="trk" style="top:1366px;background:#333"></div><div class="bar" style="top:1366px;background:#737384"></div><div class="trk" style="top:1400px;background:#333"></div><div class="bar" style="top:1400px;background:#6f3b3a"></div><div class="trk" style="top:1434px;background:#333"></div><div class="bar" style="top:1434px;background:#6f3b3a"></div><div class="trk" style="top:1468px;background:#4e4e4e"></div><div class="bar" style="top:1468px;background:#a95555"></div><div class="trk" style="top:1570px;background:#333"></div><div class="bar" style="top:1570px;background:#6f3b3a"></div><div class="a" style="left:442px;top:1468px;width:1242px;height:2px;background:#c98f8f"></div><div class="a" style="left:442px;top:1468px;width:2px;height:32px;background:#d6a9a9"></div><div class="a" style="left:429px;top:1364px;width:1269px;height:2px;background:#0b0b0b"></div><div class="a" style="left:429px;top:1398px;width:1269px;height:2px;background:#0b0b0b"></div><div class="a" style="left:429px;top:1432px;width:1269px;height:2px;background:#0b0b0b"></div><div class="a" style="left:429px;top:1466px;width:1269px;height:2px;background:#0b0b0b"></div><div class="a" style="left:429px;top:1500px;width:1269px;height:2px;background:#0b0b0b"></div><div class="a" style="left:429px;top:1534px;width:1269px;height:2px;background:#0b0b0b"></div><div class="a" style="left:429px;top:1568px;width:1269px;height:2px;background:#0b0b0b"></div><div class="a" style="left:429px;top:1602px;width:1269px;height:2px;background:#0b0b0b"></div><div class="a" style="left:454px;top:1320px;width:2px;height:370px;background:#6aa0ea"></div><svg style="left:440px;top:1294px" width="30" height="32" viewBox="440 1294 30 32"><path d="M444 1298.500C444 1296.800 445 1295.800 446.800 1295.800H463.200C465 1295.800 466 1296.800 466 1298.500V1306L455 1323.800L444 1306Z" fill="#5a9cf0"/><path d="M455 1308.500V1323M451.800 1308.700H458.200" stroke="#10284e" stroke-width="1.800"/></svg><svg style="left:442px;top:1470px" width="1242" height="30"><filter id="nb" x="0" y="0" width="100%" height="100%"><feTurbulence type="fractalNoise" baseFrequency="0.7" numOctaves="2" seed="5"/><feColorMatrix type="matrix" values="0 0 0 0 0.35  0 0 0 0 0.1  0 0 0 0 0.1  1 1 0 0 -0.7"/></filter><rect width="1242" height="30" filter="url(#nb)" opacity="0.5"/></svg><svg style="left:447px;top:1511px" width="16" height="18" viewBox="0 0 16 18"><path d="M1 1H15M1 17H15M8 1V17" stroke="#c9d6ea" stroke-width="2.200" fill="none"/></svg><svg style="left:447px;top:1545px" width="16" height="18" viewBox="0 0 16 18"><path d="M1 1H15M1 17H15M8 1V17" stroke="#c9d6ea" stroke-width="2.200" fill="none"/></svg><svg style="left:1704px;top:1330px" width="24" height="30" viewBox="0 0 24 30"><path d="M2 2H24V19L12.500 29L2 19Z" fill="#c6c6c6"/></svg><svg style="left:1698px;top:1368px" width="30" height="30" viewBox="0 0 30 30"><path d="M3 18L17 4V11H30V22H17Z" fill="#c6c6c6"/><path d="M5.500 17L15 7.500V17Z" fill="#1d1d1d"/><circle cx="14" cy="21" r="5.500" fill="#1d1d1d" stroke="#c6c6c6" stroke-width="2.200"/></svg><div class="a" style="left:1698px;top:1364px;width:30px;height:2px;background:#121212"></div><svg style="left:438px;top:1696px" width="200" height="24" viewBox="0 0 200 24"><path d="M1 15L8 9L11 12L16 6L22 15Z" fill="#c6c6c6"/><circle cx="46" cy="12" r="8" fill="none" stroke="#c6c6c6" stroke-width="3.600"/><rect x="64" y="10" width="90" height="4" rx="2" fill="#555"/><path d="M162 18L171 8H175L167 18Z M170 18L184 4L196 18Z" fill="#c6c6c6"/></svg>
</div></body></html>
